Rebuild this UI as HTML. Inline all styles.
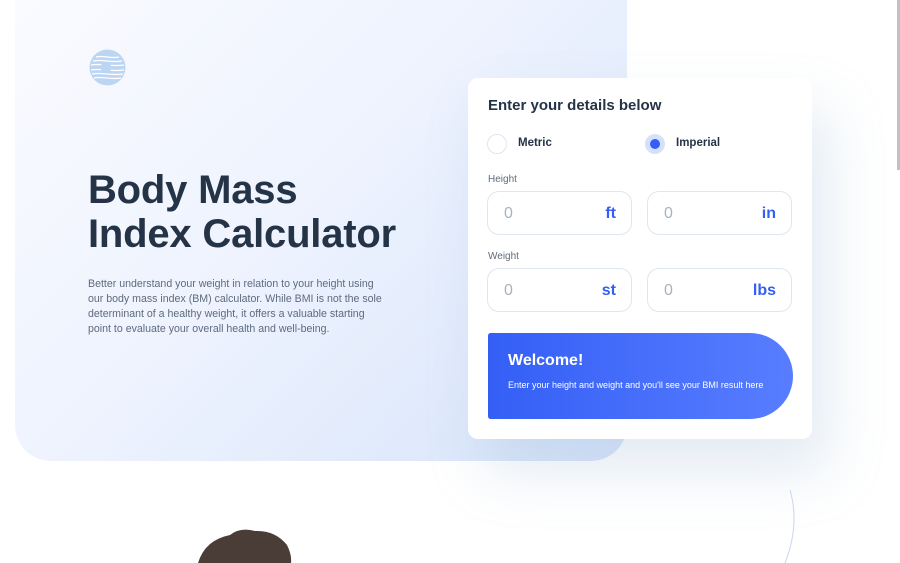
<!DOCTYPE html>
<html><head><style>
*{margin:0;padding:0;box-sizing:border-box}
body{width:900px;height:563px;overflow:hidden;background:#fff;font-family:"Liberation Sans",sans-serif;position:relative}
.bg{position:absolute;left:15px;top:0;width:612px;height:461px;border-radius:0 0 36px 36px;background:linear-gradient(135deg,#fafbff 0%,#eef3fe 45%,#d7e4fa 100%)}
.logo{position:absolute;left:89px;top:49px}
h1{position:absolute;left:88px;top:168px;font-size:40px;line-height:44px;font-weight:bold;color:#253347;letter-spacing:-0.2px}
.desc{position:absolute;left:88px;top:277px;width:300px;font-size:10.6px;line-height:15px;color:#5e6b7e}
.card{position:absolute;left:468px;top:78px;width:344px;height:361px;background:#fff;border-radius:10px;box-shadow:16px 32px 56px rgba(143,174,207,.25)}
.card h2{position:absolute;left:20px;top:19px;font-size:15px;color:#253347;font-weight:bold}
.radio{position:absolute;top:56px;width:20px;height:20px;border-radius:50%;border:1px solid #dfe6ef}
.rl{position:absolute;top:59px;font-size:11.5px;font-weight:bold;color:#253347}
.lab{position:absolute;left:20px;font-size:10px;color:#5e6b7e}
.in{position:absolute;width:145px;height:44px;border:1px solid #dfe6ef;border-radius:12px}
.in .z{position:absolute;left:16px;top:13px;font-size:16px;color:#aab2bd}
.in .u{position:absolute;right:15px;top:13px;font-size:16px;font-weight:bold;color:#345ff6}
.res{position:absolute;left:20px;top:255px;width:305px;height:86px;border-radius:6px 100px 100px 6px;background:linear-gradient(90deg,#345ff6,#587dff)}
.res b{position:absolute;left:20px;top:19px;font-size:16px;color:#fff}
.res span{position:absolute;left:20px;top:47px;font-size:9px;color:#fff}
.sb{position:absolute;right:0;top:0;width:3px;height:170px;background:#c1c1c1}
.arc{position:absolute;left:600px;top:480px}
</style></head><body>
<div class="bg"></div>
<svg class="logo" width="37" height="37" viewBox="0 0 37 37"><circle cx="18.5" cy="18.5" r="18" fill="#bcd5f2"/><g stroke="#fff" stroke-width="1.2" fill="none"><path d="M7 8c8-2 14 2 23 0M4 12c10-2 18 2 29 0M2 16c10-2 20 2 33 0M2 21c10-2 20 2 33 0M3 25c10-2 20 2 31 0M5 29c8-2 16 2 27 0"/></g><circle cx="17" cy="18.5" r="5.5" fill="#bcd5f2"/></svg>
<h1>Body Mass<br>Index Calculator</h1>
<p class="desc">Better understand your weight in relation to your height using our body mass index (BM) calculator. While BMI is not the sole determinant of a healthy weight, it offers a valuable starting point to evaluate your overall health and well-being.</p>
<div class="card">
<h2>Enter your details below</h2>
<div class="radio" style="left:19px"></div><div class="rl" style="left:50px">Metric</div>
<div class="radio" style="left:177px;border:none;background:#d6e0fd"><div style="position:absolute;left:5px;top:5px;width:10px;height:10px;border-radius:50%;background:#345ff6"></div></div><div class="rl" style="left:208px">Imperial</div>
<div class="lab" style="top:96px">Height</div>
<div class="in" style="left:19px;top:113px"><span class="z">0</span><span class="u">ft</span></div>
<div class="in" style="left:179px;top:113px"><span class="z">0</span><span class="u">in</span></div>
<div class="lab" style="top:173px">Weight</div>
<div class="in" style="left:19px;top:190px"><span class="z">0</span><span class="u">st</span></div>
<div class="in" style="left:179px;top:190px"><span class="z">0</span><span class="u">lbs</span></div>
<div class="res"><b>Welcome!</b><span>Enter your height and weight and you'll see your BMI result here</span></div>
</div>
<svg class="arc" width="200" height="83"><path d="M190 10 Q200 45 185 83" stroke="#c8d6ee" fill="none"/></svg>
<svg style="position:absolute;left:195px;top:525px" width="100" height="38"><path d="M3 38 Q10 15 35 10 Q45 2 60 6 Q80 5 92 20 Q97 30 96 38Z" fill="#4a3c36"/></svg>
<div class="sb"></div>
</body></html>
